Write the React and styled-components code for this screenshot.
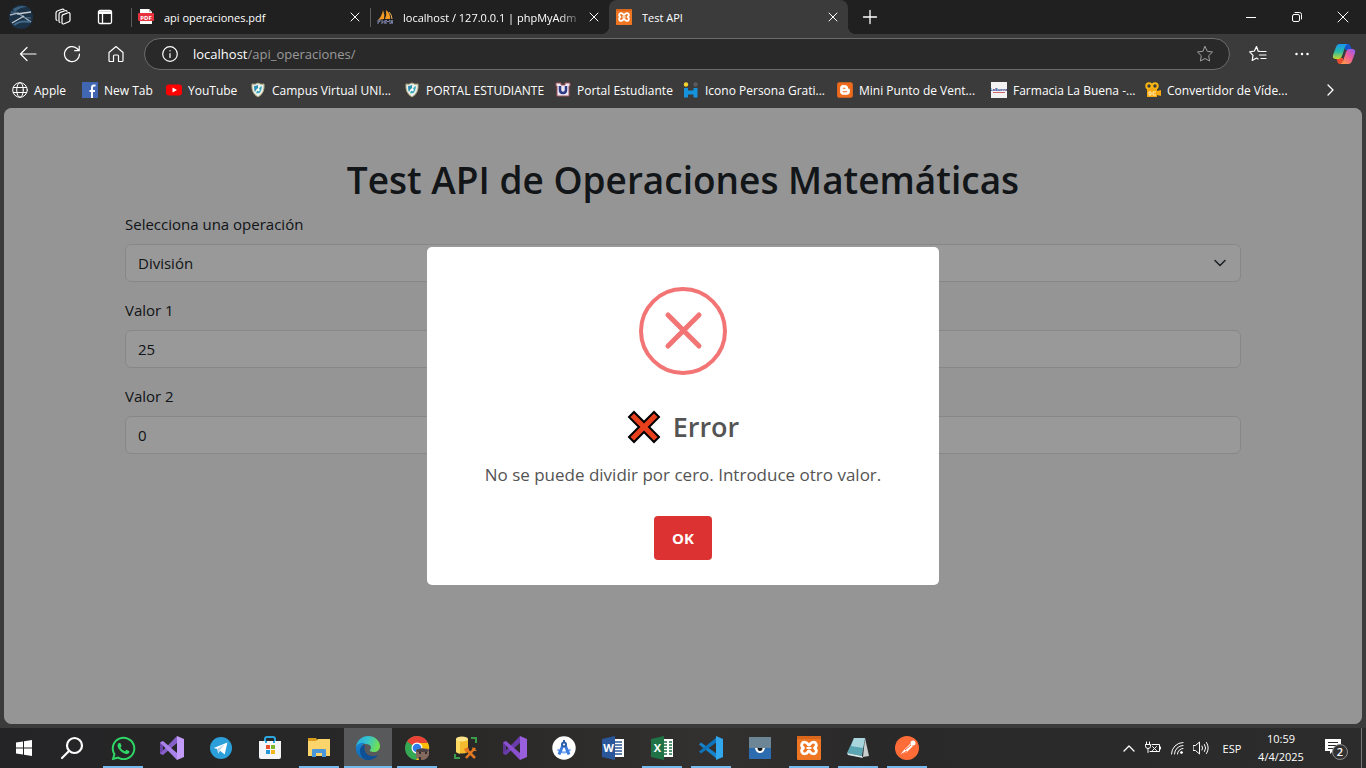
import React from "react";
import styled, { createGlobalStyle, css } from "styled-components";
import { FaWhatsapp, FaBlogger } from "react-icons/fa";

const GlobalStyle = createGlobalStyle`
  *, *::before, *::after { box-sizing: border-box; }
  body {
    margin: 0;
    background: #3b3b3b;
    font-family: "Open Sans", "Noto Sans", sans-serif;
  }
  button, input, select { font: inherit; color: inherit; }
  button { padding: 0; border: 0; background: none; cursor: pointer; }
  svg { display: block; flex: none; }
`;

const Screen = styled.div`
  display: flex;
  flex-direction: column;
  min-height: 100vh;
  overflow: hidden;
`;

/* ---------- Browser chrome ---------- */

const TitleBar = styled.header`
  display: flex;
  height: 34px;
  background: #202020;
  color: #fff;
`;

const Slot = styled.button`
  display: flex;
  align-items: center;
  justify-content: center;
  flex: none;
  width: ${(p) => p.$width || 44}px;
  height: 100%;
`;

const Leading = styled.div`
  display: flex;
  width: 131px;
  flex: none;
`;

const Tabs = styled.nav`
  display: flex;
  min-width: 0;
`;

const Tab = styled.div`
  position: relative;
  display: flex;
  align-items: center;
  gap: 10px;
  flex: 0 1 239px;
  width: 239px;
  min-width: 0;
  padding: 0 7px;
  font-size: 11px;
  ${(p) =>
    p.$active
      ? css`
          background: #3b3b3b;
          border-radius: 8px 8px 0 0;
          &::before,
          &::after {
            content: "";
            position: absolute;
            bottom: 0;
            width: 8px;
            height: 8px;
          }
          &::before {
            right: 100%;
            background: radial-gradient(circle at 0 0, transparent 8px, #3b3b3b 8px);
          }
          &::after {
            left: 100%;
            background: radial-gradient(circle at 100% 0, transparent 8px, #3b3b3b 8px);
          }
        `
      : css`
          &::before {
            content: "";
            position: absolute;
            left: 0;
            top: 8px;
            width: 1px;
            height: 19px;
            background: #5c5c5c;
          }
        `}
`;

const TabTitle = styled.span`
  flex: 1;
  min-width: 0;
  overflow: hidden;
  white-space: nowrap;
  ${(p) => p.$fade && "mask-image: linear-gradient(to right, #000 90%, rgba(0, 0, 0, 0.3));"}
`;

const CloseButton = styled.button`
  display: grid;
  place-items: center;
  width: 16px;
  height: 16px;
`;

const WindowControls = styled.div`
  display: flex;
  margin-left: auto;
`;

const Toolbar = styled.div`
  display: flex;
  align-items: center;
  height: 40px;
  padding: 0 2px 0 6px;
  background: #3b3b3b;
  color: #fff;
`;

const AddressBar = styled.div`
  display: flex;
  align-items: center;
  flex: 1;
  height: 32px;
  margin: 0 6px;
  padding: 0 15px 0 17px;
  gap: 15px;
  background: #292929;
  border: 1px solid #6c6c6c;
  border-radius: 16px;
  font-size: 13px;
`;

const Address = styled.a`
  flex: 1;
  color: #9a9a9a;
  text-decoration: none;
  strong { color: #fff; font-weight: 400; }
`;

const Bookmarks = styled.nav`
  display: flex;
  align-items: center;
  height: 34px;
  padding: 0 12px 2px;
  background: #3b3b3b;
  color: #fff;
  font-size: 12px;
`;

const Bookmark = styled.a`
  display: flex;
  align-items: center;
  gap: 6px;
  flex: 0 1 ${(p) => p.$width}px;
  min-width: 0;
  color: inherit;
  text-decoration: none;
  white-space: nowrap;
`;

const More = styled.button`
  display: grid;
  place-items: center;
  width: 24px;
  height: 24px;
  margin-left: auto;
  margin-right: 12px;
`;

/* ---------- Web page ---------- */

const Page = styled.main`
  position: relative;
  flex: 1;
  margin: 0 4px 4px;
  padding: 48px 12px;
  background: #f8f9fa;
  border-radius: 8px;
  overflow: hidden;
  color: #212529;
  font-size: 15px;
  line-height: 24px;
`;

const Form = styled.form`
  max-width: 1116px;
  margin: 0 auto;
`;

const Heading = styled.h1`
  margin: 0 0 8px;
  font-size: 37px;
  line-height: 48px;
  font-weight: 600;
  text-align: center;
`;

const Field = styled.div`
  position: relative;
  margin-bottom: 16px;
`;

const Label = styled.label`
  display: block;
  margin-bottom: 8px;
`;

const control = css`
  display: block;
  width: 100%;
  height: 38px;
  padding: 0 12px;
  background: #fff;
  border: 1px solid #dee2e6;
  border-radius: 6px;
  appearance: none;
`;
const Input = styled.input`${control}`;
const Select = styled.select`${control}`;

const Caret = styled.svg`
  position: absolute;
  right: 13px;
  bottom: 11px;
  pointer-events: none;
`;

const Backdrop = styled.div`
  position: absolute;
  inset: 0;
  display: flex;
  align-items: center;
  justify-content: center;
  background: rgba(0, 0, 0, 0.4);
`;

const Dialog = styled.section`
  display: flex;
  flex-direction: column;
  align-items: center;
  width: 512px;
  max-width: 100%;
  padding: 40px 20px 25px;
  background: #fff;
  border-radius: 5px;
  color: #545454;
`;

const DialogTitle = styled.h2`
  display: flex;
  align-items: center;
  gap: 12px;
  margin: 32px 0 0;
  font-size: 27px;
  line-height: 40px;
  font-weight: 600;
`;

const DialogText = styled.p`
  margin: 14px 0 28px;
  font-size: 17px;
  line-height: 27px;
`;

const Confirm = styled.button`
  height: 44px;
  padding: 0 18px;
  background: #dc3232;
  border-radius: 4px;
  color: #fff;
  font-size: 15px;
  font-weight: 700;
`;

/* ---------- Taskbar ---------- */

const Taskbar = styled.footer`
  display: flex;
  height: 40px;
  background: linear-gradient(90deg, #242426, #2a2928 35%, #333130 52%, #2a2929 64%, #2c2c2c);
  color: #fff;
  font-size: 12px;
`;

const Apps = styled.div`
  display: flex;
  gap: 1px;
  margin-left: 3px;
`;

const TaskButton = styled(Slot)`
  position: relative;
  width: 48px;
  background: ${(p) => (p.$active ? "#58595b" : "none")};
  &::after {
    content: "";
    display: ${(p) => (p.$open ? "block" : "none")};
    position: absolute;
    bottom: 0;
    left: ${(p) => (p.$active ? 0 : 4)}px;
    right: ${(p) => (p.$active ? 0 : 4)}px;
    height: 2px;
    background: #76b9ed;
  }
`;

const Tray = styled.div`
  display: flex;
  align-items: center;
  margin-left: auto;
`;

const Clock = styled.time`
  width: 60px;
  text-align: center;
  font-size: 11px;
  line-height: 18px;
`;

const Language = styled(Slot)`
  font-size: 11px;
`;

const ShowDesktop = styled.button`
  width: 5px;
  height: 100%;
  border-left: 1px solid #77777a;
`;

/* ---------- Drawings ---------- */

const Line = ({ size = 16, width = 1, children, ...rest }) => (
  <svg width={size} height={size} viewBox={`0 0 ${size} ${size}`} fill="none" stroke="currentColor"
    strokeWidth={width} strokeLinecap="round" strokeLinejoin="round" aria-hidden="true" {...rest}>
    {children}
  </svg>
);

const Art = ({ size = 16, box = size, children }) => (
  <svg width={size} height={size} viewBox={`0 0 ${box} ${box}`} aria-hidden="true">{children}</svg>
);

const CrossIcon = ({ size = 10 }) => (
  <Line size={size}><path d={`M1 1 ${size - 1} ${size - 1}M${size - 1} 1 1 ${size - 1}`} /></Line>
);

const Avatar = () => (
  <Art size={24}>
    <circle cx="12" cy="12" r="12" fill="#1b3247" />
    <path d="M4 4q8-5 14-2-7 0-12 5z" fill="#3d6280" />
    <path d="M1 10 9 8l13 9" stroke="#9fb0be" strokeWidth="1.5" fill="none" />
    <path d="M2 7q6-1 10 3t10 3" stroke="#56748d" fill="none" />
    <path d="M8 9 22 7M3 18l12-7" stroke="#c3ccd3" strokeWidth="1.3" fill="none" />
    <path d="M5 20q6-5 16-3" stroke="#41698b" strokeWidth="2" fill="none" />
  </Art>
);

const WorkspacesIcon = () => (
  <Line size={18} width="1.2">
    <path d="M8 8.2q0-1.200 1.100-1.600l5-1.900q1.900-.6 1.900 1.200v6q0 1.300-1.200 1.800l-4.700 2q-2.100.9-2.100-1.200z" />
    <path d="M13 3.300q-.5-1.100-2-.6L6.300 4.400Q5 5 5 6.500v6.500q0 1.300 1 1.500" />
    <path d="M10 1.700q-.6-.9-2-.4L3.300 3Q2 3.600 2 5v6q0 1.200 1 1.400" />
  </Line>
);

const PanelIcon = () => (
  <Line size={16} width="1.3">
    <rect x="1.500" y="1.500" width="13" height="13" rx="1.500" />
    <path d="M1.500 3h13M1.500 4.300h13M5.500 5v9.500" />
  </Line>
);

const PdfIcon = () => (
  <Art>
    <path d="M2 0h9l3 3v12H2z" fill="#fff" />
    <path d="M11 0v3h3z" fill="#bbb" />
    <rect y="4" width="16" height="8" rx="1" fill="#e5323e" />
    <text x="8" y="10.500" textAnchor="middle" fontSize="6" fontWeight="700" fill="#fff">PDF</text>
  </Art>
);

const PmaIcon = () => (
  <Art>
    <path d="M1 11Q5 7 6 1q2 5 1 9zM8 10q2-4 1-9 5 4 4 9z" fill="#f59a23" />
    <path d="M12 3q3 3 3 7" stroke="#f5b35b" fill="none" />
    <path d="M1 15v-4h2q1 2-2 2m4-2v4m3-4v4m-3-2h3m1 2v-4l2 2 2-2v4m1 0 1-4 1 4" stroke="#8085ad" fill="none" />
  </Art>
);

const XamppIcon = ({ size = 16 }) => (
  <Art size={size} box={24}>
    <rect width="24" height="24" rx="1" fill="#ee7622" />
    <path d="M0 0h24v3H0z" fill="#d9661b" />
    <path d="M9 6.500c-4-1.500-6 3-2.500 5.500-3.500 2.500-1.500 7 2.500 5.500 2-.5 1.500-2.500 3-2.500s1 2 3 2.500c4 1.500 6-3 2.500-5.500 3.500-2.500 1.500-7-2.500-5.500-2 .5-1.500 2.500-3 2.500s-1-2-3-2.500z"
      fill="none" stroke="#fff" strokeWidth="2.800" strokeLinejoin="round" />
    <path d="M9.500 12h5" stroke="#fff" strokeWidth="2" />
  </Art>
);

const GlobeIcon = () => (
  <Line size={16}>
    <circle cx="8" cy="8" r="7.300" /><ellipse cx="8" cy="8" rx="3.300" ry="7.300" /><path d="M1.500 5.500h13M1.500 10.500h13" />
  </Line>
);

const FacebookIcon = () => (
  <Art>
    <rect width="16" height="16" fill="#4267b2" />
    <path d="M13.500 3.500H12q-2 0-2 2V16M7.500 9h5.500" stroke="#fff" strokeWidth="2" fill="none" />
  </Art>
);

const YoutubeIcon = () => (
  <Art><rect y="2.500" width="16" height="11" rx="3" fill="#f00" /><path d="m6.500 5.500 4.500 2.500-4.500 2.500z" fill="#fff" /></Art>
);

const ShieldIcon = () => (
  <Art>
    <path d="M2 2q3 1 6-1 3 2 6 1 1 9-6 13Q1 11 2 2z" fill="#e9efe9" stroke="#b3a980" />
    <path d="M4 4q2 0 4-1v3q-2 1-3 4-1-2-1-6z" fill="#2b8fb0" />
    <path d="M12 4Q9 5 9 8q-2 0-3 3 5 2 6-7z" fill="#38a7bd" />
    <circle cx="8.500" cy="8" r="1.200" fill="#fff" />
  </Art>
);

const UIcon = () => (
  <Art>
    <path d="M1 1h5v2h4V1h5v3h-1v10H2V4H1z" fill="#eceaf5" stroke="#a0545c" />
    <path d="M5 4v4q0 3 3 3t3-3V4" fill="none" stroke="#2e3a86" strokeWidth="2.500" />
  </Art>
);

const PersonsIcon = () => (
  <Art>
    <circle cx="3" cy="2.500" r="2.200" fill="#f6d32d" /><circle cx="12.500" cy="2.500" r="2.200" fill="#5b5b5b" />
    <path d="M3 6v9.500M12.500 6v9.500M3 10.500h9" stroke="#1593dc" strokeWidth="4" />
  </Art>
);

const BloggerIcon = () => (
  <Art>
    <rect x="2" y="2" width="12" height="12" fill="#fff" />
    <FaBlogger x="-1" y="-1" size={18} color="#ee6a1c" />
  </Art>
);

const FarmaciaIcon = () => (
  <Art>
    <rect width="16" height="16" fill="#f3f1f2" />
    <text x="8" y="9" textAnchor="middle" fontSize="4" fontWeight="700" fill="#2c3e91">LaBuena</text>
    <path d="M2 10.500h12" stroke="#d36a6a" />
  </Art>
);

const CameraIcon = () => (
  <Art>
    <circle cx="4" cy="4" r="2.700" fill="none" stroke="#f7b612" strokeWidth="2" />
    <circle cx="10" cy="4" r="2.700" fill="none" stroke="#f7b612" strokeWidth="2" />
    <path d="M2 7h10v2l4-1v6l-4-1v2H2z" fill="#f7a90f" />
    <path d="M4 10v3h2v-3zm4 0h3M8 10v3h3" fill="none" stroke="#fff0c0" />
  </Art>
);

const CopilotIcon = () => (
  <Art size={24}>
    <defs>
      <linearGradient id="cpA" x1="0" y1="0" x2="0" y2="1"><stop stopColor="#1696f1" /><stop offset=".5" stopColor="#27bba7" /><stop offset="1" stopColor="#c8d52c" /></linearGradient>
      <linearGradient id="cpB" x1="1" y1="0" x2=".2" y2="1"><stop stopColor="#8b5cf6" /><stop offset=".5" stopColor="#ee5c9c" /><stop offset="1" stopColor="#ff9a45" /></linearGradient>
    </defs>
    <path d="M13 2h3q2 0 2.500 2L20 8h-7z" fill="#1753c9" />
    <path d="M11 22H8q-2 0-2.500-2L4 16h7z" fill="#ea4d32" />
    <path d="M7 2h9q-2 0-3 3l-3 9q-1 3-3 3H4q-4 0-3-4l3-8q1-3 3-3z" fill="url(#cpA)" />
    <path d="M17 22H8q2 0 3-3l3-9q1-3 3-3h3q4 0 3 4l-3 8q-1 3-3 3z" fill="url(#cpB)" />
  </Art>
);

const VisualStudioIcon = ({ flat }) => (
  <Art size={24}>
    <path d="M0 6.500 3 5v14l-3-1.500z" fill={flat ? "#5f3596" : "#6b45a8"} />
    <path d="M3 19 17 7V0L0 17.500z" fill={flat ? "#6a3cab" : "#8660c8"} />
    <path d="M3 5 17 17v7L0 6.500z" fill={flat ? "#8a50cf" : "#a983ea"} />
    <path d="m17 0 7 3v18l-7 3z" fill={flat ? "#9a5fdc" : "#c39bf8"} />
  </Art>
);

const TelegramIcon = () => (
  <Art size={22} box={24}>
    <circle cx="12" cy="12" r="12" fill="#2b9fd9" />
    <path d="M4 12 19 6l-3 13-5-4-2 3-1-5z" fill="#fff" /><path d="m8 13 8-5-5 6-2 4z" fill="#b9d7e8" />
  </Art>
);

const StoreIcon = () => (
  <Art size={24}>
    <path d="M7 6V3q0-2 2-2h6q2 0 2 2v3" fill="none" stroke="#2da6df" strokeWidth="2" />
    <path d="M1 5h22v16q0 2-2 2H3q-2 0-2-2z" fill="#f4f5f6" />
    <path d="M7 5h2v2H7zM15 5h2v2h-2z" fill="#2da6df" />
    <path d="M8 9h4v4H8z" fill="#e8502c" /><path d="M13 9h4v4h-4z" fill="#7fb52b" />
    <path d="M8 14h4v4H8z" fill="#2797dc" /><path d="M13 14h4v4h-4z" fill="#f5b51d" />
  </Art>
);

const ExplorerIcon = () => (
  <Art size={24}>
    <path d="M1 2h8l2 3H1z" fill="#d99c1c" /><path d="M1 5h8l2-2h12v17H1z" fill="#fbd56b" />
    <path d="M5 21v-7q0-1 1-1h12q1 0 1 1v7h-4v-4H9v4z" fill="#4a98d9" />
  </Art>
);

const EdgeIcon = () => (
  <Art size={24}>
    <defs>
      <linearGradient id="edA" x1="0" y1="0" x2="1" y2=".3"><stop stopColor="#2aa9e0" /><stop offset=".5" stopColor="#33c3cf" /><stop offset="1" stopColor="#6fdf58" /></linearGradient>
      <linearGradient id="edB" x1="0" y1="0" x2="0" y2="1"><stop stopColor="#1686d8" /><stop offset="1" stopColor="#1167ad" /></linearGradient>
    </defs>
    <path d="M0 11C1 4 6 0 12 0c7 0 12 5 12 10 0 4-3 6-6 6-3 0-5-1-4-2 2-2 1-6-4-6-5-1-9 1-10 3z" fill="url(#edA)" />
    <path d="M0 11c1-3 5-5 9-4-4 2-5 6-4 10 1 3 4 6 7 7C5 24-1 18 0 11z" fill="url(#edB)" />
    <path d="M9 9c-2 6 2 12 9 11 2 0 3-1 4-1-2 3-6 5-10 5-5 0-8-5-8-9 0-3 2-6 5-6z" fill="#0f4f95" />
  </Art>
);

const ChromeIcon = () => (
  <Art size={26}>
    <circle cx="13" cy="13" r="12" fill="#34a853" />
    <path d="M13 13 3 6.500A12 12 0 0 1 24 8H13z" fill="#ea4335" />
    <path d="M13 8h11a12 12 0 0 1-12 17l6-9z" fill="#fbbc04" />
    <circle cx="13" cy="13" r="5.500" fill="#fff" /><circle cx="13" cy="13" r="4.300" fill="#2f7de9" />
    <path d="M12 15q5-3 13-1v6q-2 5-7 5-6-1-6-4z" fill="#84695f" />
    <path d="M12 15q5-3 13 0l-2 2H13z" fill="#4b4144" />
    <path d="M15 18h2M21 18h2M16 22v3" stroke="#362e2e" strokeWidth="2" />
  </Art>
);

const DatabaseToolIcon = () => (
  <Art size={24}>
    <path d="M2 3v13q6 3 12 0V3z" fill="#f2bc2e" /><path d="M2 3v13q2 1.500 4 1.700V3z" fill="#ffda62" />
    <ellipse cx="8" cy="3" rx="6" ry="2.500" fill="#ffe589" />
    <path d="M17 2h5v5M1 18v4h5" fill="none" stroke="#3a9c4a" strokeWidth="2" />
    <path d="m12 13 9 9M21 12l-9 10" stroke="#e57922" strokeWidth="2.500" />
    <path d="m10 13 4-2 1 3-3 3zM18 11l1 4h4" fill="#e57922" />
  </Art>
);

const AndroidStudioIcon = () => (
  <Art size={24}>
    <circle cx="12" cy="12" r="11.700" fill="#fff" />
    <path d="M5.500 13.500q6.500 6 13 0" fill="none" stroke="#79a9f5" strokeWidth="2" />
    <path d="M11 9 7 18.500M13 9l4 9.500" stroke="#3c7ddf" strokeWidth="3" /><circle cx="12" cy="8.500" r="3" fill="#2d5fa8" />
    <circle cx="12" cy="8.500" r="1" fill="#fff" /><path d="M12 4v3" stroke="#2d5fa8" strokeWidth="2" />
  </Art>
);

const OfficeIcon = ({ letter, color }) => (
  <Art size={24}>
    <path d="M12 3h11v18H12z" fill="#fff" />
    {letter === "X"
      ? <path d="M14 6h3m2 0h3M14 9h3m2 0h3M14 12h3m2 0h3M14 15h3m2 0h3M14 18h3m2 0h3" stroke={color} strokeWidth="1.500" />
      : <path d="M14 6h7M14 9h7M14 12h7M14 15h7M14 18h7" stroke={color} strokeWidth="1.500" />}
    <path d="m1 3 13-3v24L1 21z" fill={color} />
    <text x="7.500" y="16" textAnchor="middle" fontSize="11" fontWeight="700" fill="#fff">{letter}</text>
  </Art>
);

const VsCodeIcon = () => (
  <Art size={24}>
    <path d="m0 8.500 2-2L18 18v5z" fill="#1683cd" /><path d="m0 15.500 2 2L18 6V1z" fill="#0f73b9" />
    <path d="m17 0 7 3v18l-7 3z" fill="#31a8ee" />
  </Art>
);

const GazeIcon = () => (
  <Art size={24}>
    <path d="M1 1h22v11H1z" fill="#6c8696" /><path d="M1 12h22v11H1z" fill="#2e6cb0" />
    <path d="M7 12h10q-1 5-5 5t-5-5z" fill="#fff" /><path d="M9.500 12h5q0 3-2.500 3t-2.500-3z" fill="#151515" />
  </Art>
);

const NotepadIcon = () => (
  <Art size={24}>
    <path d="m19 2 4 18-6 1z" fill="#c9cdcd" />
    <path d="M8 2h11l-3 18-15-3z" fill="#5aa5b2" />
    <path d="M8 2h11l-2 10-12-2z" fill="#a9d6dc" />
    <path d="m1 17 15 3 1 2-15-3z" fill="#d9eced" />
  </Art>
);

const PostmanIcon = () => (
  <Art size={24}>
    <circle cx="12" cy="12" r="12" fill="#ff6c37" />
    <path d="m5 19 4-5 6-6 3 2-6 6z" fill="#fff" /><circle cx="18" cy="7" r="2.500" fill="#fff" />
    <path d="m10 14 6-5M5 19l7-4" stroke="#ff6c37" />
  </Art>
);

const apps = [
  { name: "WhatsApp", icon: <FaWhatsapp size={27} color="#2fd566" />, open: true },
  { name: "Visual Studio", icon: <VisualStudioIcon /> },
  { name: "Telegram", icon: <TelegramIcon /> },
  { name: "Microsoft Store", icon: <StoreIcon /> },
  { name: "Explorador", icon: <ExplorerIcon />, open: true },
  { name: "Edge", icon: <EdgeIcon />, open: true, active: true },
  { name: "Chrome", icon: <ChromeIcon />, open: true },
  { name: "SQL Server", icon: <DatabaseToolIcon /> },
  { name: "Visual Studio 2019", icon: <VisualStudioIcon flat /> },
  { name: "Android Studio", icon: <AndroidStudioIcon /> },
  { name: "Word", icon: <OfficeIcon letter="W" color="#2b579a" /> },
  { name: "Excel", icon: <OfficeIcon letter="X" color="#1f7346" />, open: true },
  { name: "VS Code", icon: <VsCodeIcon />, open: true },
  { name: "Visor", icon: <GazeIcon /> },
  { name: "XAMPP", icon: <XamppIcon size={24} />, open: true },
  { name: "Bloc de notas", icon: <NotepadIcon />, open: true },
  { name: "Postman", icon: <PostmanIcon />, open: true },
];

const tabs = [
  { title: "api operaciones.pdf", icon: <PdfIcon /> },
  { title: "localhost / 127.0.0.1 | phpMyAdm", icon: <PmaIcon />, fade: true },
  { title: "Test API", icon: <XamppIcon />, active: true },
];

const bookmarks = [
  { label: "Apple", width: 70, icon: <GlobeIcon /> },
  { label: "New Tab", width: 84, icon: <FacebookIcon /> },
  { label: "YouTube", width: 84, icon: <YoutubeIcon /> },
  { label: "Campus Virtual UNI...", width: 154, icon: <ShieldIcon /> },
  { label: "PORTAL ESTUDIANTE", width: 151, icon: <ShieldIcon /> },
  { label: "Portal Estudiante", width: 128, icon: <UIcon /> },
  { label: "Icono Persona Grati...", width: 154, icon: <PersonsIcon /> },
  { label: "Mini Punto de Vent...", width: 154, icon: <BloggerIcon /> },
  { label: "Farmacia La Buena -...", width: 154, icon: <FarmaciaIcon /> },
  { label: "Convertidor de Víde...", width: 154, icon: <CameraIcon /> },
];

const starPath = "m9 1.500 2.300 4.800 5.200.7-3.800 3.700.9 5.300L9 13.500 4.400 16l.9-5.300L1.500 7l5.200-.7z";

export default function App() {
  return (
    <Screen>
      <GlobalStyle />
      <TitleBar>
        <Leading>
          <Slot $width={42} aria-label="Perfil"><Avatar /></Slot>
          <Slot $width={42} aria-label="Espacios de trabajo"><WorkspacesIcon /></Slot>
          <Slot $width={42} aria-label="Acciones de pestañas"><PanelIcon /></Slot>
        </Leading>
        <Tabs>
          {tabs.map((t) => (
            <Tab key={t.title} $active={t.active}>
              {t.icon}
              <TabTitle $fade={t.fade}>{t.title}</TabTitle>
              <CloseButton aria-label="Cerrar pestaña"><CrossIcon /></CloseButton>
            </Tab>
          ))}
        </Tabs>
        <Slot aria-label="Nueva pestaña"><Line size={16} width="1.3"><path d="M8 1.500v13M1.500 8h13" /></Line></Slot>
        <WindowControls>
          <Slot $width={46} aria-label="Minimizar"><Line size={10}><path d="M0 5.500h10" /></Line></Slot>
          <Slot $width={46} aria-label="Restaurar">
            <Line size={12}><rect x="1.500" y="3.500" width="7" height="7" rx="1.500" /><path d="M4 1.500h4.500q2 0 2 2V8" /></Line>
          </Slot>
          <Slot $width={46} aria-label="Cerrar"><CrossIcon size={12} /></Slot>
        </WindowControls>
      </TitleBar>

      <Toolbar>
        <Slot aria-label="Atrás"><Line size={18} width="1.2"><path d="M17 9H1.500M8 2.500 1.500 9 8 15.500" /></Line></Slot>
        <Slot aria-label="Actualizar">
          <Line size={18} width="1.2"><path d="M16.500 9A7.500 7.500 0 1 1 14 3.500L16 5.500M16.200 1.200v4.500h-4.500" /></Line>
        </Slot>
        <Slot aria-label="Inicio">
          <Line size={18} width="1.2"><path d="M2 7.500 9 1.500l7 6v8q0 1-1 1h-3.500V11q0-1-1-1h-3q-1 0-1 1v5.500H3q-1 0-1-1z" /></Line>
        </Slot>
        <AddressBar>
          <Line size={16} width="1.2"><circle cx="8" cy="8" r="7.300" /><path d="M8 7.500v4M8 4.700v.2" /></Line>
          <Address href="#"><strong>localhost</strong>/api_operaciones/</Address>
          <Line size={18} color="#a0a0a0"><path d={starPath} /></Line>
        </AddressBar>
        <Slot aria-label="Favoritos">
          <Line size={18} width="1.2"><path d="m11 6.500-1.800-.3L7.500 1.500 5.400 6l-4.700.8 3.300 3.500-.8 5.200 4.300-2.400 1.500.9M12 6.500h5M10.500 10H17M12 13.500h5" /></Line>
        </Slot>
        <Slot aria-label="Más"><Line size={16} width="2.500"><path d="M2.500 8h.01M8 8h.01M13.500 8h.01" /></Line></Slot>
        <Slot $width={40} aria-label="Copilot"><CopilotIcon /></Slot>
      </Toolbar>

      <Bookmarks>
        {bookmarks.map((b) => (
          <Bookmark key={b.label} href="#" $width={b.width}>{b.icon}{b.label}</Bookmark>
        ))}
        <More aria-label="Más favoritos"><Line size={12} width="1.3"><path d="m4 1 5 5-5 5" /></Line></More>
      </Bookmarks>

      <Page>
        <Form>
          <Heading>Test API de Operaciones Matemáticas</Heading>
          <Field>
            <Label htmlFor="operation">Selecciona una operación</Label>
            <Select id="operation" defaultValue="div"><option value="div">División</option></Select>
            <Caret width="16" height="16" viewBox="0 0 16 16" fill="none" stroke="#343a40" strokeWidth="1.6" strokeLinecap="round" strokeLinejoin="round"><path d="m3 5.500 5 5 5-5" /></Caret>
          </Field>
          <Field>
            <Label htmlFor="value1">Valor 1</Label>
            <Input id="value1" defaultValue="25" />
          </Field>
          <Field>
            <Label htmlFor="value2">Valor 2</Label>
            <Input id="value2" defaultValue="0" />
          </Field>
        </Form>
        <Backdrop>
          <Dialog role="alertdialog" aria-labelledby="error-title">
            <Line size={88} width="4" color="#f27474">
              <circle cx="44" cy="44" r="42" /><path d="m29 28 31 31M60 28 29 59" strokeWidth="5" />
            </Line>
            <DialogTitle id="error-title">
              <svg width="34" height="34" viewBox="0 0 34 34" aria-hidden="true">
                <path d="m7 2 10 10L27 2l5 5-10 10 10 10-5 5-10-10L7 32l-5-5 10-10L2 7z" fill="#e8401c" stroke="#000" strokeWidth="2" />
              </svg>
              Error
            </DialogTitle>
            <DialogText>No se puede dividir por cero. Introduce otro valor.</DialogText>
            <Confirm type="button">OK</Confirm>
          </Dialog>
        </Backdrop>
      </Page>

      <Taskbar>
        <Slot $width={48} aria-label="Inicio de Windows">
          <Art size={16}><path d="M0 2.500 7 1.500v6H0zM8 1.300 16 0v7.500H8zM0 8.500h7v6l-7-1zM8 8.500h8V16l-8-1.300z" fill="#fff" /></Art>
        </Slot>
        <Slot $width={48} aria-label="Buscar">
          <Line size={24} width="2.200"><circle cx="14.500" cy="9.500" r="7.500" /><path d="M9 15 2 22" /></Line>
        </Slot>
        <Apps>
          {apps.map((a) => (
            <TaskButton key={a.name} $open={a.open} $active={a.active} aria-label={a.name}>{a.icon}</TaskButton>
          ))}
        </Apps>
        <Tray>
          <Slot $width={24} aria-label="Iconos ocultos"><Line size={12} width="1.3"><path d="m1 9 5-5 5 5" /></Line></Slot>
          <Slot $width={24} aria-label="Batería">
            <Line size={16}><path d="M1.500 2v2M4.500 2v2M.5 4.500h5v2q0 2-2.500 2T.5 6.500zM3 8.500v4M7 4.500h7.500v7H5M15.500 7v2M7.500 6.500l4 4M11.500 6.500l-4 4" /></Line>
          </Slot>
          <Slot $width={24} aria-label="Wi-Fi">
            <Line size={14}><path d="M1.500 13A11.500 11.500 0 0 1 13 1.500M4.500 13A8.500 8.500 0 0 1 13 4.500M7.500 13A5.500 5.500 0 0 1 13 7.500" /><circle cx="11.500" cy="11.500" r="1" fill="currentColor" /></Line>
          </Slot>
          <Slot $width={24} aria-label="Volumen">
            <Line size={16}><path d="M.5 5.500h2L6.500 2v12l-4-3.500h-2zM9 6q1.500 2 0 4M11.500 4.500q2.500 3.500 0 7M13.500 2.500q3.500 5.500 0 11" /></Line>
          </Slot>
          <Language $width={38}>ESP</Language>
          <Clock>10:59<br />4/4/2025</Clock>
          <Slot $width={50} aria-label="2 notificaciones">
            <Art size={26}>
              <path d="M2 4h16v12h-8l-3 3v-3H2z" fill="#fff" /><path d="M5 7.500h10M5 10.500h10M5 13.500h6" stroke="#2b2b2b" />
              <circle cx="17" cy="17" r="7.500" fill="#333" stroke="#8d8d8d" />
              <text x="17" y="21" textAnchor="middle" fontSize="11" fontWeight="600" fill="#fff">2</text>
            </Art>
          </Slot>
          <ShowDesktop aria-label="Mostrar escritorio" />
        </Tray>
      </Taskbar>
    </Screen>
  );
}
